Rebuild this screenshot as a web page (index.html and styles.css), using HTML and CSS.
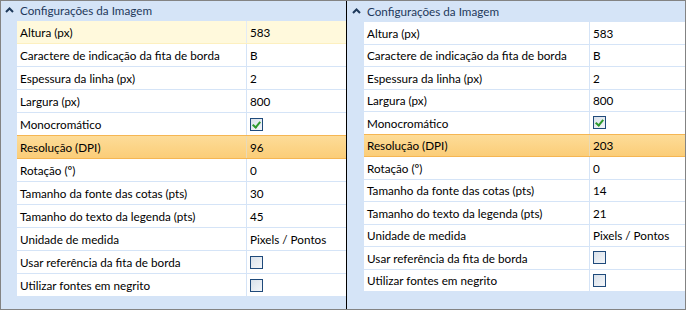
FILE: index.html
```html
<!DOCTYPE html>
<html lang="pt">
<head>
    <meta charset="UTF-8">
    <title>Configurações da Imagem</title>
    <link rel="stylesheet" href="styles.css">
</head>
<body>
    <div class="frame">
        <!-- painel esquerdo -->
        <div class="grid left">
            <div class="category">
                <svg class="chevron" width="9" height="6" viewBox="0 0 9 6"><path d="M1 5 L4.5 1.5 L8 5" fill="none" stroke="#1e395b" stroke-width="2"/></svg>
                <span>Configurações da Imagem</span>
            </div>
            <div class="body">
                <div class="gutter"></div>
                <div class="rows">
                    <div class="row hover"><div class="label">Altura (px)</div><div class="value">583</div></div>
                    <div class="row"><div class="label">Caractere de indicação da fita de borda</div><div class="value">B</div></div>
                    <div class="row"><div class="label">Espessura da linha (px)</div><div class="value">2</div></div>
                    <div class="row"><div class="label">Largura (px)</div><div class="value">800</div></div>
                    <div class="row"><div class="label">Monocromático</div><div class="value"><span class="check on"></span></div></div>
                    <div class="row selected"><div class="label">Resolução (DPI)</div><div class="value">96</div></div>
                    <div class="row"><div class="label">Rotação (º)</div><div class="value">0</div></div>
                    <div class="row"><div class="label">Tamanho da fonte das cotas (pts)</div><div class="value">30</div></div>
                    <div class="row"><div class="label">Tamanho do texto da legenda (pts)</div><div class="value">45</div></div>
                    <div class="row"><div class="label">Unidade de medida</div><div class="value">Pixels / Pontos</div></div>
                    <div class="row"><div class="label">Usar referência da fita de borda</div><div class="value"><span class="check"></span></div></div>
                    <div class="row"><div class="label">Utilizar fontes em negrito</div><div class="value"><span class="check"></span></div></div>
                </div>
            </div>
        </div>

        <!-- painel direito -->
        <div class="grid right">
            <div class="category">
                <svg class="chevron" width="9" height="6" viewBox="0 0 9 6"><path d="M1 5 L4.5 1.5 L8 5" fill="none" stroke="#1e395b" stroke-width="2"/></svg>
                <span>Configurações da Imagem</span>
            </div>
            <div class="body">
                <div class="gutter"></div>
                <div class="rows">
                    <div class="row"><div class="label">Altura (px)</div><div class="value">583</div></div>
                    <div class="row"><div class="label">Caractere de indicação da fita de borda</div><div class="value">B</div></div>
                    <div class="row"><div class="label">Espessura da linha (px)</div><div class="value">2</div></div>
                    <div class="row"><div class="label">Largura (px)</div><div class="value">800</div></div>
                    <div class="row"><div class="label">Monocromático</div><div class="value"><span class="check on"></span></div></div>
                    <div class="row selected"><div class="label">Resolução (DPI)</div><div class="value">203</div></div>
                    <div class="row"><div class="label">Rotação (º)</div><div class="value">0</div></div>
                    <div class="row"><div class="label">Tamanho da fonte das cotas (pts)</div><div class="value">14</div></div>
                    <div class="row"><div class="label">Tamanho do texto da legenda (pts)</div><div class="value">21</div></div>
                    <div class="row"><div class="label">Unidade de medida</div><div class="value">Pixels / Pontos</div></div>
                    <div class="row"><div class="label">Usar referência da fita de borda</div><div class="value"><span class="check"></span></div></div>
                    <div class="row"><div class="label">Utilizar fontes em negrito</div><div class="value"><span class="check"></span></div></div>
                </div>
            </div>
        </div>
    </div>
</body>
</html>
```
FILE: styles.css
```css
body {
    margin: 0;
    background: #ffffff;
    font-family: Lato, "Liberation Sans", sans-serif;
    font-size: 11.7px;
    color: #000000;
}

.frame {
    display: flex;
    width: 684px;
    height: 308px;
    border: 1px solid #838383;
    background-color: #d5e4f7;
}

.grid {
    display: flex;
    flex-direction: column;
}

.grid.left {
    width: 345px;
    border-right: 1px solid #000000;
}

.grid.right {
    flex: 1;
}

.category {
    display: flex;
    align-items: center;
    height: 17px;
    padding-bottom: 2px;
    color: #1e395b;
}

.right .category {
    height: 19px;
    padding-bottom: 1px;
}

.chevron {
    display: block;
    margin: 0 6px 0 4px;
}

.right .chevron {
    margin-left: 5px;
}

.body {
    display: flex;
}

.gutter {
    width: 16px;
}

.right .gutter {
    width: 17px;
}

.rows {
    flex: 1;
    display: flex;
    flex-direction: column;
    border-top: 1px solid #d5e4f7;
}

.row {
    display: grid;
    grid-template-columns: 229px 1fr;
    height: 22px;
    flex: none;
    background-color: #ffffff;
    border-bottom: 1px solid #d5e4f7;
}

.right .row {
    grid-template-columns: 225px 1fr;
    height: 21.5px;
}

.label {
    display: flex;
    align-items: center;
    padding-left: 3px;
    white-space: nowrap;
    overflow: hidden;
}

.value {
    display: flex;
    align-items: center;
    padding-left: 3px;
    border-left: 1px solid #d5e4f7;
    white-space: nowrap;
}

.row.hover {
    background-color: #fff9dc;
    border-bottom-color: #fdf0c0;
}

.row.hover .value {
    border-left-color: #e3ebf4;
}

.row.selected {
    background: linear-gradient(#fddc98, #fbcd78);
    border-top: 1px solid #f5b653;
    border-bottom: 1px solid #f5b653;
    margin-top: -1px;
}

.row.selected .value {
    border-left-color: #e8d9b8;
}

.check {
    position: relative;
    display: inline-block;
    width: 11px;
    height: 11px;
    border: 1px solid #1f4a7b;
    background: linear-gradient(135deg, #d9e1ea, #f4f6f9);
}

.check.on::after {
    content: "";
    position: absolute;
    left: 3px;
    top: 1px;
    width: 3px;
    height: 6px;
    border-right: 2px solid #2d9a2d;
    border-bottom: 2px solid #2d9a2d;
    transform: rotate(40deg);
}
```
